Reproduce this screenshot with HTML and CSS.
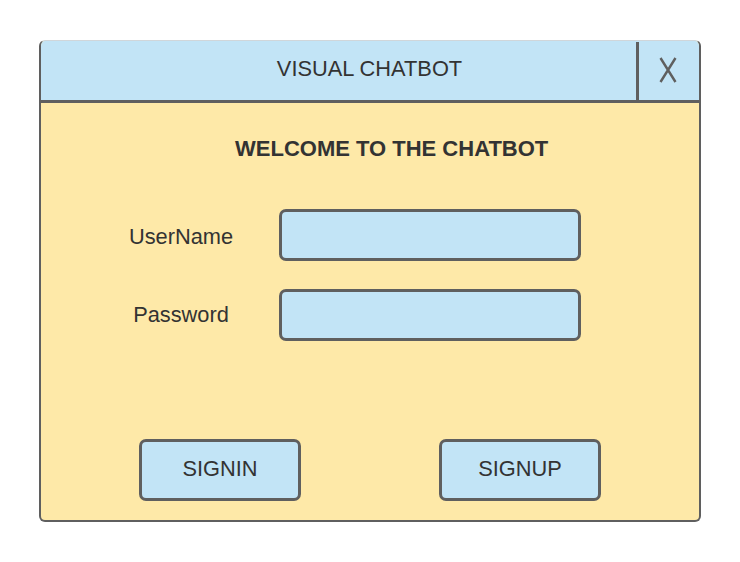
FILE: index.html
```html
<!DOCTYPE html>
<html>
<head>
<meta charset="utf-8">
<link rel="stylesheet" href="styles.css">
</head>
<body>
<div class="window">
  <div class="titlebar">
    <div class="title">VISUAL CHATBOT</div>
    <div class="close">
      <svg width="18" height="26" viewBox="0 0 18 26"><path d="M1.5 1 L16.5 25 M16.5 1 L1.5 25" stroke="#5f5f5f" stroke-width="2.4" fill="none"/></svg>
    </div>
  </div>
  <div class="content">
    <div class="welcome">WELCOME TO THE CHATBOT</div>
    <div class="form">
      <div class="label label-first">UserName</div>
      <div class="field"></div>
      <div class="label">Password</div>
      <div class="field"></div>
    </div>
    <div class="buttons">
      <div class="btn">SIGNIN</div>
      <div class="btn">SIGNUP</div>
    </div>
  </div>
</div>
</body>
</html>
```
FILE: styles.css
```css
html, body { margin: 0; padding: 0; background: #ffffff; }
body { font-family: "Liberation Sans", Arial, sans-serif; color: #333333; }
.window {
  margin: 40px 0 0 39px;
  width: 662px;
  height: 482px;
  box-sizing: border-box;
  border: 2px solid #5f5f5f;
  border-top: 1px solid #d0d6da;
  border-radius: 6px;
  background: #fee9a8;
  overflow: hidden;
  display: flex;
  flex-direction: column;
}
.titlebar {
  height: 59px;
  background: #c2e4f6;
  border-bottom: 3px solid #5f5f5f;
  display: flex;
}
.title {
  flex: 1;
  padding-left: 62px;
  padding-bottom: 4px;
  display: flex;
  align-items: center;
  justify-content: center;
  font-size: 21.8px;
}
.close {
  width: 57px;
  margin-top: 1px;
  border-left: 3px solid #5f5f5f;
  display: flex;
  align-items: center;
  justify-content: center;
  padding-right: 3px;
  padding-bottom: 2px;
}
.content {
  flex: 1;
  display: flex;
  flex-direction: column;
}
.welcome {
  margin: 33px 0 0 194px;
  font-size: 22px;
  font-weight: bold;
  line-height: 26px;
}
.form {
  margin: 47px 0 0 84px;
  display: grid;
  grid-template-columns: 112px 302px;
  column-gap: 42px;
  row-gap: 28px;
  align-items: center;
}
.label {
  font-size: 21.8px;
  text-align: center;
}
.label-first {
  padding-top: 4px;
}
.field {
  height: 52px;
  box-sizing: border-box;
  border: 3px solid #5f5f5f;
  border-radius: 7px;
  background: #c2e4f6;
}
.buttons {
  margin: 98px 0 0 98px;
  display: flex;
  gap: 138px;
}
.btn {
  width: 162px;
  height: 62px;
  box-sizing: border-box;
  border: 3px solid #5f5f5f;
  border-radius: 7px;
  background: #c2e4f6;
  display: flex;
  align-items: center;
  justify-content: center;
  padding-bottom: 3px;
  font-size: 21.8px;
}
```
